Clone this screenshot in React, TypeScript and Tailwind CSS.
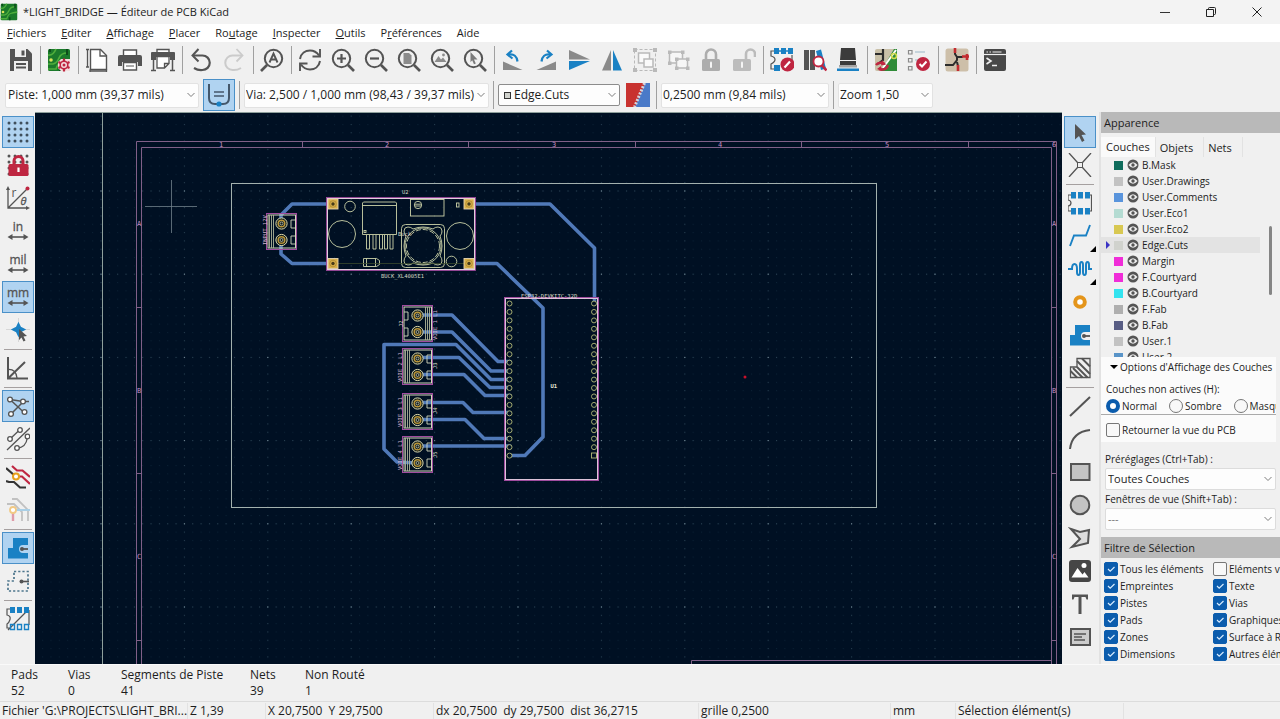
import React, { useState } from "react";

const G = "#545454";
const B = "#1a81c4";
const R = "#bf2641";
const L = "#b9b9b9";

type IconProps = { children: React.ReactNode };

function Svg({ children }: IconProps) {
  return (
    <svg viewBox="0 0 24 24" className="block size-6" fill="none" aria-hidden="true">
      {children}
    </svg>
  );
}

function Lens({ children }: IconProps) {
  return (
    <Svg>
      <circle cx="10.5" cy="10.5" r="8.7" stroke={G} strokeWidth="2" />
      <path d="M17 17l6 6" stroke={G} strokeWidth="2.6" />
      {children}
    </Svg>
  );
}

function PcbArt() {
  return (
    <>
      <rect x="1" y="1" width="22" height="22" rx="1.5" fill="#1b7a2b" />
      <path d="M1 7q5 1 8-6M1 16h5q4-1 6-6t8-5M1 21h8q2-6 5-7t9-2" stroke="#4fae3c" strokeWidth="1.700" />
      <path d="M3 1v3M20 1v6M13 23v-4" stroke="#0d4d1a" strokeWidth="2" />
      <circle cx="4" cy="12" r="1.8" fill="#d9e35a" />
    </>
  );
}

function Dim({ label }: { label: string }) {
  return (
    <Svg>
      <text x="12" y="12" textAnchor="middle" fontSize="12" fontFamily="Open Sans, sans-serif" fill={G} stroke={G} strokeWidth="0.3">
        {label}
      </text>
      <path d="M4 18h16" stroke={G} strokeWidth="1.6" />
      <path d="M1.5 18l5-3v6zM22.500 18l-5-3v6z" fill={G} />
    </Svg>
  );
}

function Padlock({ color, open }: { color: string; open?: boolean }) {
  return (
    <Svg>
      <path d={open ? "M14 11V6a4.500 4.500 0 0 1 9 0v3" : "M7 11V6.500a5 5 0 0 1 10 0V11"} stroke={color} strokeWidth="2.600" />
      <rect x={open ? 1 : 3} y="11" width="18" height="12" rx="1.500" fill={color} />
      <path d={open ? "M10 14.500v4.500" : "M12 14.500v4.500"} stroke="#f5f5f5" strokeWidth="2" strokeLinecap="round" />
    </Svg>
  );
}

const dots = (color: string) =>
  [3, 9, 15, 21].flatMap((x) => [3, 9, 15, 21].map((y) => <circle key={`${x}-${y}`} cx={x} cy={y} r="1.500" fill={color} />));

const icons: Record<string, React.ReactNode> = {
  save: (
    <Svg>
      <path d="M1 1h17.500L23 5.500V23H1z" fill={G} />
      <path d="M6 1h11v8H6zM5 13h14v10H5z" fill="#f0f0f0" />
      <path d="M12.500 2.500h3v5h-3z" fill={G} />
      <path d="M7 16h10M7 19.500h10" stroke={G} strokeWidth="1.800" />
    </Svg>
  ),
  board: (
    <Svg>
      <PcbArt />
      <path d="M11 14l3-3h9v12h-9l-3-3z" fill="#f3dede" />
      <circle cx="17" cy="17" r="3.800" stroke={R} strokeWidth="1.600" />
      <circle cx="17" cy="17" r="1.500" fill={R} />
      <path d="M17 10.500v2.500M17 21v2.500M11.500 14l2 1M20.500 19l2 1M22.500 14l-2 1M11.500 20l2-1" stroke={R} strokeWidth="2.200" />
    </Svg>
  ),
  page: (
    <Svg>
      <path d="M5.500 1.500h10l6 6v14h-16z" fill="#fff" stroke={G} strokeWidth="1.400" />
      <path d="M15 1.500v6.500h6.500M2.500 1v18M1 1.500h3M1 19h3M5 23h17M5 21.500V24M21.500 21.500V24" stroke={G} strokeWidth="1.300" />
    </Svg>
  ),
  print: (
    <Svg>
      <path d="M5.500 2h13v6h-13z" fill="#fff" stroke={G} strokeWidth="1.400" />
      <path d="M0 9q0-2 2-2h20q2 0 2 2v9h-4v-4H4v4H0z" fill={G} />
      <path d="M5.500 14.500h13V22h-13z" fill="#fff" stroke={G} strokeWidth="1.400" />
      <path d="M8 18h8" stroke={G} />
    </Svg>
  ),
  plot: (
    <Svg>
      <path d="M6 1.500h12V5H6z" fill="#fff" stroke={G} strokeWidth="1.400" />
      <path d="M0 5q0-1 1-1h22q1 0 1 1v7h-5V9H5v3H0z" fill={G} />
      <path d="M6 8.500h12v7l-4.500 4.500H6zM18 15.500h-4.500v4.500" fill="#fff" stroke={G} strokeWidth="1.300" />
      <path d="M2.500 12v10M21.500 12v10M0 22.500h5M19 22.500h5" stroke={G} strokeWidth="1.500" />
    </Svg>
  ),
  undo: (
    <Svg>
      <path d="M4 7.500h9.500a7 7 0 0 1 0 14.500Q9 22.500 5 20" stroke={G} strokeWidth="2.200" />
      <path d="M9.500 1L3.500 7.500l6 6" stroke={G} strokeWidth="2" />
    </Svg>
  ),
  redo: (
    <Svg>
      <path d="M20 7.500h-9.500a7 7 0 0 0 0 14.500Q15 22.500 19 20" stroke="#cbcbcb" strokeWidth="2" />
      <path d="M14.500 1l6 6.500-6 6" stroke="#cbcbcb" strokeWidth="1.800" />
    </Svg>
  ),
  find: (
    <Svg>
      <circle cx="13.500" cy="10.500" r="8.700" stroke={G} strokeWidth="2" />
      <path d="M7 17l-6 6" stroke={G} strokeWidth="2.600" />
      <path d="M9.500 14.500l4-9 4 9M11 11.500h5" stroke={G} strokeWidth="1.900" />
    </Svg>
  ),
  refresh: (
    <Svg>
      <path d="M2 11C3 5 7.500 2.500 12 2.500c4 0 7 2 9 5M22 13c-1 6-5.500 8.500-10 8.500-4 0-7-2-9-5" stroke={G} strokeWidth="2" />
      <path d="M22 1v7.500h-7.500M2 23v-7.500h7.500" stroke={G} strokeWidth="1.900" />
    </Svg>
  ),
  zin: <Lens><path d="M10.500 6v9M6 10.500h9" stroke={G} strokeWidth="2.200" /></Lens>,
  zout: <Lens><path d="M6 10.500h9" stroke={G} strokeWidth="2.200" /></Lens>,
  zfit: <Lens><path d="M6.500 5h5.500l2.500 2.500V16h-8z" fill="#8c8c8c" /></Lens>,
  zobj: <Lens><path d="M4.500 14l4-6 2.500 3.500 2-2 3.500 4.500z" fill="#8c8c8c" /><circle cx="13.500" cy="7" r="1.400" fill="#8c8c8c" /></Lens>,
  zsel: <Lens><path d="M7.500 4l7 7.500h-3.500l1.800 4-1.800.8-1.800-4-1.700 2z" fill="#7a7a7a" /></Lens>,
  ccw: (
    <Svg>
      <path d="M2 13.500v8.500h19.500z" fill="#8a8a8a" />
      <path d="M8 6.500q7.500-1 8.500 7" stroke={B} strokeWidth="2.200" />
      <path d="M11 2.500L6.500 6.500l5 4" stroke={B} strokeWidth="2.200" />
    </Svg>
  ),
  cw: (
    <Svg>
      <path d="M22 13.500v8.500H2.500z" fill="#8a8a8a" />
      <path d="M16 6.500q-7.500-1-8.500 7" stroke={B} strokeWidth="2.200" />
      <path d="M13 2.500l4.500 4-5 4" stroke={B} strokeWidth="2.200" />
    </Svg>
  ),
  flipv: (
    <Svg>
      <path d="M2 2l21 9.500H2z" fill="#8a8a8a" />
      <path d="M2 22l21-9H2z" fill={B} />
    </Svg>
  ),
  fliph: (
    <Svg>
      <path d="M11 2v20.500H2z" fill="#8a8a8a" />
      <path d="M13 2v20.500h9z" fill={B} />
    </Svg>
  ),
  group: (
    <Svg>
      <rect x="1.500" y="1.500" width="21" height="21" stroke={L} strokeDasharray="3 2" />
      <path d="M0 0h4v4H0zM20 0h4v4h-4zM0 20h4v4H0zM20 20h4v4h-4z" fill={L} />
      <rect x="5.500" y="5" width="11" height="10" fill="#fafafa" stroke={L} strokeWidth="1.500" />
      <rect x="11" y="11" width="9" height="8" fill="#fafafa" stroke={L} strokeWidth="1.500" />
    </Svg>
  ),
  ungroup: (
    <Svg>
      <rect x="3.500" y="4" width="13" height="11" fill="#f6f6f6" stroke={L} strokeWidth="1.500" />
      <rect x="10.500" y="11" width="11" height="9" fill="#f6f6f6" stroke={L} strokeWidth="1.500" />
      <path d="M2 2.500h3.500V6H2zM15 2.500h3.500V6H15zM2 13.500h3.500V17H2zM9 9.500h3.500V13H9zM20 9.500h3.500V13H20zM9 18.500h3.500V22H9zM20 18.500h3.500V22H20z" fill={L} />
    </Svg>
  ),
  lock: <Padlock color="#adadad" />,
  unlock: <Padlock color="#bcbcbc" open />,
  fpedit: (
    <Svg>
      <path d="M4 3H1v5q4 1 4 3.500T1 16v5h4M22 7v5" stroke={G} strokeWidth="1.200" />
      <path d="M4 3h19" stroke={B} strokeWidth="1.500" />
      <path d="M4 0h5v6H4zM11 0h5v6h-5zM18 0h5v6h-5zM4 17h6v6H4z" fill={B} />
      <circle cx="17.500" cy="16.500" r="7" fill={R} />
      <path d="M14.500 19.500l5.500-6" stroke="#fff" strokeWidth="2.200" />
    </Svg>
  ),
  lib: (
    <Svg>
      <path d="M1 2h5v20H1zM7 2h5v20H7z" fill={G} />
      <path d="M13 3l5-1.500 5 19-5 1.500z" fill={B} />
      <circle cx="15.500" cy="13.500" r="5" fill="#fff" stroke={R} strokeWidth="1.800" />
      <path d="M19 17.500l4.500 5" stroke={R} strokeWidth="2.600" />
    </Svg>
  ),
  stamp: (
    <Svg>
      <path d="M5 0h14l1 12H4zM4 13h16v4H4z" fill="#3b3b3b" />
      <path d="M3 17h18v2.500H3z" fill="#a5a5a5" />
      <path d="M1 20.500h22V23H1z" fill={B} />
    </Svg>
  ),
  update: (
    <Svg>
      <rect x="1" y="1" width="22" height="22" rx="2" fill="#c9c0a8" />
      <path d="M20 1h3v22H7z" fill="#2f8b38" />
      <path d="M1 6h8M9 1v11l-5 4" stroke="#2c2c2c" strokeWidth="2.200" />
      <path d="M22 2L9 20" stroke="#fff" strokeWidth="2" />
      <circle cx="20" cy="8" r="2.500" stroke="#d3dc4f" strokeWidth="1.500" />
      <path d="M2 17q3-4 9-1M14 17q-2 6-9 4" stroke={R} strokeWidth="2.400" />
      <path d="M8 12l4 4.500-5 1zM7 18l-4 3 5 2z" fill={R} />
    </Svg>
  ),
  drc: (
    <Svg>
      <path d="M1.500 2.500H5V6H1.500zM1.500 10.500H5V14H1.500zM1.500 18.500H5V22H1.500z" stroke="#8a8a8a" strokeWidth="1.200" />
      <path d="M8 4h10M8 12h5" stroke="#9bb8c8" strokeWidth="1.200" />
      <circle cx="16" cy="16" r="7" fill={R} />
      <path d="M12.500 16l2.500 2.500 4.500-5" stroke="#fff" strokeWidth="2" />
    </Svg>
  ),
  sch: (
    <Svg>
      <rect x="0.500" y="0.500" width="23" height="23" rx="2.500" fill="#cdbfa9" />
      <path d="M0 17h8l4-5V9l-2-3V1M12 9h6M12 14l1 4" stroke="#2c2c2c" strokeWidth="2" />
      <path d="M10 0v5M17 8.500h7M13 17v6M22 6v6" stroke="#c32b30" strokeWidth="2.600" />
    </Svg>
  ),
  term: (
    <Svg>
      <rect x="1" y="1" width="22" height="22" rx="2" fill="#484848" />
      <path d="M1 6.500h22" stroke="#f0f0f0" strokeWidth="1.200" />
      <path d="M3.500 4h1.500M6.500 4H8M9.500 4h9" stroke="#f0f0f0" strokeWidth="1.200" />
      <path d="M3.500 10l4.500 3-4.500 3M9 17.500h5" stroke="#f0f0f0" strokeWidth="1.600" />
    </Svg>
  ),
  trackw: (
    <Svg>
      <path d="M2 1v14q0 6 6 6h8q6 0 6-6V1" stroke="#44576b" strokeWidth="2" />
      <path d="M7 9h10M7 13h10" stroke="#44576b" strokeWidth="1.500" />
      <circle cx="12" cy="21" r="2.600" fill={B} />
    </Svg>
  ),
  grid: <Svg>{dots("#3f4f5c")}</Svg>,
  gridlock: (
    <Svg>
      {dots(G)}
      <path d="M8 12V8a4.500 4.500 0 0 1 9 0v4" stroke={R} strokeWidth="3" />
      <rect x="2.500" y="11" width="20" height="12" rx="1.500" fill={R} />
      <path d="M12.500 14.500V19" stroke="#fff" strokeWidth="2.200" />
    </Svg>
  ),
  polar: (
    <Svg>
      <path d="M2 3v19h19M2 22L21 3" stroke={G} strokeWidth="1.300" />
      <path d="M2 0L0 4h4zM24 22l-4-2v4z" fill={G} />
      <circle cx="21.500" cy="2.500" r="2" fill={R} />
      <text x="5.500" y="11" fontSize="12" fontFamily="Open Sans, sans-serif" fill={G}>r</text>
      <text x="14.500" y="19" fontSize="11" fontStyle="italic" fontFamily="Open Sans, sans-serif" fill={G} stroke={G} strokeWidth="0.300">θ</text>
    </Svg>
  ),
  in: <Dim label="in" />,
  mil: <Dim label="mil" />,
  mm: <Dim label="mm" />,
  cursor: (
    <Svg>
      <path d="M12.500 0v24M0 11.500h24" stroke="#d0d0d0" strokeWidth="0.800" />
      <path d="M12.500 5.500l2 4 4 2-4 2-2 4-2-4-4-2 4-2z" fill={B} stroke={B} strokeWidth="1.500" />
      <path d="M13 11l8 7-3.500.5 2 4-2 1-2-4-2.500 2.500z" fill={G} />
    </Svg>
  ),
  angle: (
    <Svg>
      <path d="M2 1v21.500h20M2 22.500L19 6" stroke={G} strokeWidth="2" />
      <path d="M2 13.500q8-.5 9 8.500" stroke={G} strokeWidth="1.300" />
    </Svg>
  ),
  rats: (
    <Svg>
      <path d="M4 5.500l13 2h6M5 20l12-12M4 5.500l14 13" stroke={G} strokeWidth="1.500" />
      <g fill="#fff" stroke={G} strokeWidth="1.300"><circle cx="4" cy="5.500" r="2.400" /><circle cx="17" cy="7.500" r="2.400" /><circle cx="5" cy="20" r="2.400" /><circle cx="18.500" cy="18" r="2.400" /></g>
    </Svg>
  ),
  curved: (
    <Svg>
      <path d="M1 23L24 1M4 12L14 2.500M11 21q9 0 10.500-11" stroke={G} strokeWidth="1.300" />
      <g fill="#fff" stroke={G} strokeWidth="1.300"><circle cx="4" cy="12" r="2.300" /><circle cx="14" cy="3" r="2.300" /><circle cx="11" cy="21" r="2.300" /><circle cx="21.500" cy="9.500" r="2.300" /></g>
    </Svg>
  ),
  contrast: (
    <Svg>
      <path d="M6 1l5 4.500h5.500l7.500 6.500M11 11.500h5l8 7.500" stroke={R} strokeWidth="2.200" />
      <path d="M0 3l8 7M0 16l3 1h5l6 5.500h6" stroke="#333" strokeWidth="2.200" />
      <circle cx="10" cy="11.500" r="3" fill="#fff" stroke="#e8a01c" strokeWidth="2" />
    </Svg>
  ),
  nets: (
    <Svg>
      <path d="M1 6h7l8 8v9M6 1h5l11 11v11" stroke="#c1c1c1" strokeWidth="1.800" />
      <path d="M6 12h18" stroke="#a9cfe6" strokeWidth="2" />
      <path d="M7 13v10" stroke="#df9ba8" strokeWidth="2.400" />
      <circle cx="7" cy="12" r="3" fill="#fff" stroke="#f1c984" strokeWidth="1.800" />
    </Svg>
  ),
  zone: (
    <Svg>
      <path d="M7 2h15v7h-5a4 4 0 1 0 0 8h5v5.500H2V12h5z" fill={B} />
      <path d="M15 13h7" stroke={G} strokeWidth="1.800" />
      <circle cx="16" cy="13" r="2" fill={G} />
    </Svg>
  ),
  zoneoff: (
    <Svg>
      <path d="M8 2.500h14V22H2V12h6z" stroke="#4c758c" strokeWidth="1.700" strokeDasharray="2.200 2" />
      <path d="M15 12.500h8" stroke={G} strokeWidth="1.600" />
      <circle cx="15.500" cy="12.500" r="2" fill={G} />
    </Svg>
  ),
  outline: (
    <Svg>
      <path d="M4 2H1v6q4 1 3 4.500T1 17v4h3M23 3v15M2 23L21 4" stroke={G} strokeWidth="1.200" />
      <path d="M4 0h5v6H4zM11 0h5v6h-5zM18 0h5v6h-5z" fill={B} />
      <path d="M4.500 17.500h4v5h-4zM11.500 17.500h4v5h-4zM18.500 17.500h4v5h-4z" stroke={B} strokeWidth="1.400" />
    </Svg>
  ),
  arrow: <Svg><path d="M7 4l11 10.500-4.500.5 3 5.500-2.500 1.500-3-6-4 3.500z" fill={G} /></Svg>,
  localrat: (
    <Svg>
      <path d="M1 0l8.500 9.500M23 0l-8.500 9.500M1 24l8.500-9.500M23 24l-8.500-9.500" stroke={G} strokeWidth="1.300" />
      <rect x="9.500" y="9.500" width="5" height="5" stroke={G} />
    </Svg>
  ),
  footprint: (
    <Svg>
      <path d="M3 4H0v5q3 .5 3 3t-3 3v5h3M21 4h2.500v16H21" stroke={G} strokeWidth="1.200" />
      <path d="M3 1h5v6.500H3zM10 1h5v6.500h-5zM17 1h5v6.500h-5zM3 17h5v6.500H3zM10 17h5v6.500h-5zM17 17h5v6.500h-5z" fill={B} />
    </Svg>
  ),
  route: <Svg><path d="M2 22l4-10.500h12L22 1" stroke={B} strokeWidth="1.900" /></Svg>,
  tune: <Svg><path d="M0 12h4q0-5 2.500-5T9 12v3q0 3 1.500 3t1.500-3V8q0-3 1.500-3T15 8v7q0 3 1.500 3t1.500-3V8q0-3 1.500-3T21 8v4h3" stroke={B} strokeWidth="2" /></Svg>,
  via: <Svg><circle cx="12" cy="12" r="4.800" fill="#fff" stroke="#e4951b" strokeWidth="4" /></Svg>,
  rule: (
    <Svg>
      <path d="M9 2.500h13v19H2.500V11H9z" fill="#eee" stroke={G} strokeWidth="1.300" />
      <path d="M9 5l13 13M14 2.500l8 8M9 11l10.500 10.500M5 12l9.500 9.500M2.500 15l6.500 6.500" stroke={G} strokeWidth="1.900" />
    </Svg>
  ),
  line: <Svg><path d="M2 22L22 3" stroke={G} strokeWidth="2" /></Svg>,
  arc: <Svg><path d="M2 22Q4 5 22 3" stroke={G} strokeWidth="2" /></Svg>,
  rect: <Svg><path d="M3 4h18.500v16H3z" fill="#c3c3c3" stroke={G} strokeWidth="2" /></Svg>,
  circle: <Svg><circle cx="12" cy="12" r="9.300" fill="#c3c3c3" stroke={G} strokeWidth="2" /></Svg>,
  poly: <Svg><path d="M3 3l9 3 9-2-1 13-16 4 8-8z" fill="#ddd" stroke={G} strokeWidth="2" /></Svg>,
  image: (
    <Svg>
      <rect x="1" y="1" width="22" height="22" rx="3" fill="#464646" />
      <path d="M3.500 18.500l6-9.500 5 6.500 2-2.500 4 5.500z" fill="#fff" />
      <circle cx="16" cy="6.500" r="2.500" fill="#fff" />
    </Svg>
  ),
  text: <Svg><path d="M4 2.500h16v5h-1.500l-1-2.500H13.500v17h-3V5H6.500l-1 2.500H4z" fill={G} /></Svg>,
  textbox: (
    <Svg>
      <path d="M3 4h19v16H3z" fill="#ccc" stroke={G} strokeWidth="2" />
      <path d="M6 9h12M6 12h8M6 15h11" stroke={G} strokeWidth="1.400" />
    </Svg>
  ),
};

type Tool = { id: string; label: string; active?: boolean; more?: boolean } | "|";

const mainTools: Tool[] = [
  { id: "save", label: "Enregistrer" }, "|",
  { id: "board", label: "Options du circuit imprimé" }, "|",
  { id: "page", label: "Ajustage page" }, { id: "print", label: "Imprimer" }, { id: "plot", label: "Tracer" }, "|",
  { id: "undo", label: "Annuler" }, { id: "redo", label: "Refaire" }, "|",
  { id: "find", label: "Chercher" }, "|",
  { id: "refresh", label: "Rafraîchir" }, { id: "zin", label: "Zoom avant" }, { id: "zout", label: "Zoom arrière" },
  { id: "zfit", label: "Zoom automatique" }, { id: "zobj", label: "Zoom sur les objets" }, { id: "zsel", label: "Zoom sur la sélection" }, "|",
  { id: "ccw", label: "Rotation anti-horaire" }, { id: "cw", label: "Rotation horaire" }, { id: "flipv", label: "Miroir vertical" },
  { id: "fliph", label: "Miroir horizontal" }, { id: "group", label: "Grouper" }, { id: "ungroup", label: "Dégrouper" },
  { id: "lock", label: "Verrouiller" }, { id: "unlock", label: "Déverrouiller" }, "|",
  { id: "fpedit", label: "Éditeur d'empreintes" }, { id: "lib", label: "Librairies d'empreintes" }, { id: "stamp", label: "Visualisateur 3D" }, "|",
  { id: "update", label: "Mise à jour du PCB" }, { id: "drc", label: "Contrôle DRC" }, "|",
  { id: "sch", label: "Éditeur de schématique" }, "|",
  { id: "term", label: "Console" },
];

const leftTools: Tool[] = [
  { id: "grid", label: "Afficher la grille", active: true }, { id: "gridlock", label: "Grille verrouillée" }, { id: "polar", label: "Coordonnées polaires" },
  { id: "in", label: "Pouces" }, { id: "mil", label: "Mils" }, { id: "mm", label: "Millimètres", active: true }, { id: "cursor", label: "Curseur" }, "|",
  { id: "angle", label: "Limiter les angles" }, "|",
  { id: "rats", label: "Chevelu", active: true }, { id: "curved", label: "Chevelu courbe" }, "|",
  { id: "contrast", label: "Contraste élevé" }, { id: "nets", label: "Surbrillance des nets" }, "|",
  { id: "zone", label: "Zones remplies", active: true }, { id: "zoneoff", label: "Contours de zones" }, "|",
  { id: "outline", label: "Contours des pads" },
];

const rightTools: Tool[] = [
  { id: "arrow", label: "Sélection", active: true }, { id: "localrat", label: "Chevelu local" }, "|",
  { id: "footprint", label: "Ajouter une empreinte" }, { id: "route", label: "Router", more: true }, { id: "tune", label: "Ajuster la longueur", more: true },
  { id: "via", label: "Ajouter une via" }, { id: "zone", label: "Ajouter une zone" }, { id: "rule", label: "Zone interdite" }, "|",
  { id: "line", label: "Ligne" }, { id: "arc", label: "Arc" }, { id: "rect", label: "Rectangle" }, { id: "circle", label: "Cercle" },
  { id: "poly", label: "Polygone" }, { id: "image", label: "Image" }, { id: "text", label: "Texte" }, { id: "textbox", label: "Boîte de texte" },
];

function ToolButton({ tool }: { tool: Exclude<Tool, "|"> }) {
  return (
    <button
      type="button"
      aria-label={tool.label}
      title={tool.label}
      className={
        tool.active
          ? "relative grid size-8 shrink-0 place-items-center border border-[#4a90c8] bg-[#b0d3f1]"
          : "relative grid size-8 shrink-0 place-items-center"
      }
    >
      {icons[tool.id]}
      {tool.more && <span className="absolute right-0 bottom-0 size-0 border-b-6 border-l-6 border-b-black border-l-transparent" />}
    </button>
  );
}

function VerticalTools({ tools, label, className }: { tools: Tool[]; label: string; className: string }) {
  return (
    <div role="toolbar" aria-label={label} className={`flex shrink-0 flex-col items-center gap-px overflow-hidden pt-1 ${className}`}>
      {tools.map((t, i) =>
        t === "|" ? (
          <div key={i} className="flex h-1 w-7 shrink-0 items-center"><span className="h-px w-full bg-[#a5a0a0]" /></div>
        ) : (
          <ToolButton key={i} tool={t} />
        )
      )}
    </div>
  );
}

function Combo({ label, value, className, selectClass }: { label: string; value: string; className: string; selectClass: string }) {
  return (
    <div className={`relative shrink-0 ${className}`}>
      <select aria-label={label} defaultValue={value} className={`block w-full appearance-none rounded-xs border outline-none ${selectClass}`}>
        <option>{value}</option>
      </select>
      <svg viewBox="0 0 8 5" className="pointer-events-none absolute top-1/2 right-1 h-[5px] w-2 -translate-y-1/2" fill="none" aria-hidden="true">
        <path d="M0.500 0.500L4 4l3.500-3.500" stroke="#7d7d7d" />
      </svg>
    </div>
  );
}

function Sep() {
  return <span className="h-7 w-px shrink-0 bg-[#a0a0a0]" />;
}

type ConnectorProps = { x: number; y: number; flip?: boolean };

function Connector({ x, y, flip }: ConnectorProps) {
  const bars = flip ? [22, 24, 26] : [2, 4, 6];
  return (
    <g transform={`translate(${x} ${y})`} fill="none">
      <rect x="-0.500" y="-0.500" width="30" height="36" stroke="#a04c9f" />
      <rect x="1" y="1" width="27.500" height="33" stroke="#d3d8bc" />
      {bars.map((b) => <path key={b} d={`M${b + 0.5} 1v33`} stroke="#aeb498" strokeWidth="0.900" />)}
      <path d={flip ? "M1 6h4v8H1M1 22h4v8H1" : "M28 6h-4v8h4M28 22h-4v8h4"} stroke="#d3d8bc" strokeWidth="0.900" />
      {[9.5, 26].map((cy) => (
        <g key={cy}>
          <circle cx="14.500" cy={cy} r="5.600" fill="#0c1a1c" stroke="#e0dcae" strokeWidth="1" />
          <circle cx="14.500" cy={cy} r="3.300" stroke="#b8943a" strokeWidth="1.500" />
          <circle cx="14.500" cy={cy} r="1.500" stroke="#e5e0c0" strokeWidth="0.700" />
        </g>
      ))}
    </g>
  );
}

const tracks = [
  "M417 315H452L498 361.500H510", "M417 332H452L491 371H510", "M417 463L397 462L384 449V344.500H456L491 379.500H510",
  "M417 357.500H459L490 387.500H510", "M417 374.500H464L485 395.500H510", "M417 402.500H463L473 412.500H510",
  "M417 419.500H465L484 438.500H510", "M417 446H510", "M510 455.500H525L543 437V308L497 263.500H469",
  "M469 204H550L594.500 248V303", "M333 204H292L281 215V224", "M281 240V254L292 263.500H333",
];

const pins = Array.from({ length: 19 }, (_, i) => 303.5 + i * 8.45);

function Board() {
  return (
    <svg
      viewBox="35 112 1027 553"
      preserveAspectRatio="xMinYMin slice"
      className="block h-full w-full bg-[#001023]"
      role="img"
      aria-label="Circuit imprimé"
      fontFamily="DejaVu Sans Mono, monospace"
      fontSize="5.500"
    >
      <defs>
        <pattern id="fine" x="517.500" y="190.500" width="8.340" height="8.320" patternUnits="userSpaceOnUse"><rect width="1" height="1" fill="#0c2235" /></pattern>
        <pattern id="rows" x="517.500" y="190.500" width="8.340" height="83.200" patternUnits="userSpaceOnUse"><rect width="1" height="1" fill="#2b4253" /></pattern>
        <pattern id="cols" x="517.500" y="190.500" width="83.400" height="8.320" patternUnits="userSpaceOnUse"><rect width="1" height="1" fill="#263d4e" /></pattern>
        <pattern id="cross" x="517.500" y="190.500" width="83.400" height="83.200" patternUnits="userSpaceOnUse"><rect width="1" height="1" fill="#7a8e9a" /></pattern>
      </defs>
      {["fine", "rows", "cols", "cross"].map((p) => <rect key={p} x="35" y="112" width="1600" height="1000" fill={`url(#${p})`} />)}

      <path d="M35 112.500H1700M102.500 112V1200" stroke="#8fa09c" fill="none" />
      <g stroke="#806088" fill="none">
        <path d="M136.500 1200V141.500H1056.500V1200M141.500 1200V147.500H1051.500V1200" />
        <path d="M302.500 142v5M468.500 142v5M635.500 142v5M801.500 142v5M968.500 142v5" />
        <path d="M136 307.500h5M136 473.500h5M136 640.500h5M1051 307.500h5M1051 473.500h5M1051 640.500h5" />
        <path d="M691.500 700V660.500H1051" />
      </g>
      <g fill="#c48fc2" textAnchor="middle" fontSize="7">
        {[221, 387, 554, 720, 887, 1054].map((x, i) => <text key={x} x={x} y="147">{i + 1}</text>)}
        {[224, 391, 557].map((y, i) => (
          <React.Fragment key={y}>
            <text x="139" y={y + 2}>{"ABC"[i]}</text>
            <text x="1054" y={y + 2}>{"ABC"[i]}</text>
          </React.Fragment>
        ))}
      </g>

      <rect x="231.500" y="183.500" width="645" height="324" fill="none" stroke="#a3b1ae" />
      <g stroke="#5079b8" strokeWidth="3.600" fill="none" strokeLinejoin="round" strokeLinecap="round">
        {tracks.map((d) => <path key={d} d={d} />)}
      </g>

      <g fill="none" stroke="#ccd2a8" strokeWidth="0.900">
        <rect x="326.500" y="197.500" width="149" height="73" stroke="#a04c9f" />
        <rect x="327.500" y="198.500" width="147" height="71" stroke="#e0d0dc" strokeWidth="1" />
        <circle cx="350" cy="206.500" r="5.300" />
        <circle cx="342" cy="234" r="13.500" />
        <circle cx="460" cy="236" r="13.500" />
        <circle cx="451.500" cy="261.500" r="5.300" />
        <path d="M362.500 205.500h34M362.500 234.500V203l1-1h32l1 1v31.500z" />
        <path d="M366.500 235v14h3v-14M373 235v14h3v-14M379.500 235v14h3v-14M384.500 235v14h3v-14M390 235v14h3v-14" />
        <rect x="364" y="230.500" width="2" height="2" />
        <rect x="410.500" y="199.500" width="33.500" height="16.500" />
        <circle cx="418" cy="205" r="3.700" />
        <path d="M415 204.200h6M415 206h6" />
        <rect x="456.500" y="203" width="2.500" height="4" />
        <rect x="401.500" y="224.500" width="43" height="43" rx="4" />
        <path d="M404 231q0-4 4-4 3 0 5 2 10-4 20 0 2-2 5-2 4 0 4 4 0 3-2 5 4 10 0 20 2 2 2 5 0 4-4 4-3 0-5-2-10 4-20 0-2 2-5 2-4 0-4-4 0-3 2-5-4-10 0-20-2-2-2-5z" />
        <circle cx="423" cy="246" r="18" />
        <circle cx="423" cy="246" r="16.500" strokeDasharray="5 2" />
        <path d="M363.500 258.500h13l3 2v4l-3 2h-13zM366.500 258.500v8M375.500 258.500v8" />
        <path d="M338 263.500h126" stroke="#41512f" strokeWidth="0.700" />
      </g>
      {[[333, 204], [469, 204], [333, 263.5], [469, 263.5]].map(([x, y]) => (
        <g key={`${x}-${y}`}>
          <rect x={x - 5} y={y - 5} width="10" height="10" fill="#d9b04a" stroke="#e6d4b0" strokeWidth="0.900" />
          <circle cx={x} cy={y} r="1.700" fill="#473b18" />
          <circle cx={x} cy={y} r="3.300" fill="none" stroke="#8e7124" strokeWidth="0.500" />
        </g>
      ))}

      <Connector x={267} y={214} />
      <Connector x={403} y={306} flip />
      <Connector x={403} y={349} />
      <Connector x={403} y={394} />
      <Connector x={403} y={437} />

      <rect x="504.500" y="297.500" width="94" height="183" fill="none" stroke="#a04c9f" />
      <rect x="505.500" y="298.500" width="92" height="181" fill="none" stroke="#dcc3d9" />
      <g fill="#001023" stroke="#b3ba78" strokeWidth="0.900">
        {pins.map((y) => <circle key={y} cx="509.500" cy={y} r="2.500" />)}
        {pins.slice(0, -1).map((y) => <circle key={y} cx="594" cy={y} r="2.500" />)}
        <rect x="591.500" y="453" width="5" height="5" />
      </g>

      <g fill="#d4d6c4">
        <text x="402" y="194">U2</text>
        <text x="550.500" y="388" fill="#e8e8d8" fontWeight="bold">U1</text>
        <text x="381" y="278">BUCK_XL4005E1</text>
        <text x="521" y="297.500">ESP32-DEVKITC-32D</text>
        <text x="398" y="236">Buck</text>
        <text transform="translate(266.500 245) rotate(-90)" fill="#d3b3d0">INPUT 12V</text>
        <text transform="translate(403 327) rotate(-90)">J2</text>
        <text transform="translate(437 369) rotate(-90)">J3</text>
        <text transform="translate(437 414) rotate(-90)">J4</text>
        <text transform="translate(437 458) rotate(-90)">J5</text>
        <text transform="translate(437 340) rotate(-90)" fill="#d3b3d0">VOIE 1 L1</text>
        <text transform="translate(402 382) rotate(-90)" fill="#d3b3d0">VOIE 2 L1</text>
        <text transform="translate(402 427) rotate(-90)" fill="#d3b3d0">VOIE 3 L1</text>
        <text transform="translate(402 470) rotate(-90)" fill="#d3b3d0">VOIE 4 L1</text>
      </g>

      <path d="M145 206.500h52M171.500 180v53" stroke="#70808a" strokeWidth="0.800" />
      <circle cx="745" cy="377" r="1.500" fill="#c8102a" />
    </svg>
  );
}

const layers: [string, string][] = [
  ["B.Mask", "bg-[#0f6c5c]"], ["User.Drawings", "bg-[#c2c2c2]"], ["User.Comments", "bg-[#5994dc]"], ["User.Eco1", "bg-[#b4dbd2]"],
  ["User.Eco2", "bg-[#d8c852]"], ["Edge.Cuts", "bg-[#d0d2cd]"], ["Margin", "bg-[#f02dd8]"], ["F.Courtyard", "bg-[#f02dd8]"],
  ["B.Courtyard", "bg-[#33e3ef]"], ["F.Fab", "bg-[#afafaf]"], ["B.Fab", "bg-[#585d84]"], ["User.1", "bg-[#c2c2c2]"], ["User.2", "bg-[#5994c8]"],
];

function Check({ label, on }: { label: string; on?: boolean }) {
  return (
    <label className="flex h-[17px] items-center gap-0.5 whitespace-nowrap">
      <span className="relative size-[14px] shrink-0">
        <input type="checkbox" defaultChecked={on} className="peer block size-[14px] appearance-none rounded-xs border border-[#777] bg-[#f8f8f8] checked:border-[#0b5cad] checked:bg-[#0b5cad]" />
        <svg viewBox="0 0 14 14" className="pointer-events-none absolute top-0 left-0 hidden size-[14px] peer-checked:block" fill="none" aria-hidden="true">
          <path d="M4 7l2.200 2.200L10.500 5" stroke="#d8ecff" strokeWidth="1.200" />
        </svg>
      </span>
      {label}
    </label>
  );
}

function Appearance() {
  const [tab, setTab] = useState("Couches");
  return (
    <aside className="flex w-[181px] shrink-0 flex-col overflow-hidden border-l-2 border-[#e2e2e2] text-[10px] leading-4">
      <h2 className="flex h-[21px] shrink-0 items-center bg-[#b9b9b9] pl-[3px] text-[11px]">Apparence</h2>
      <div role="tablist" className="mt-1 flex h-5 shrink-0 items-stretch text-[11px]">
        {["Couches", "Objets", "Nets"].map((t) => (
          <button
            key={t}
            type="button"
            role="tab"
            aria-selected={t === tab}
            onClick={() => setTab(t)}
            className={t === tab ? "border-r border-[#e2e2e2] bg-[#fafafa] px-[5px]" : "border-r border-[#e2e2e2] pt-0.5 pr-2.5 pl-1"}
          >
            {t}
          </button>
        ))}
      </div>
      <div className="flex h-[200px] shrink-0 overflow-hidden">
        <ul className="w-[159px]">
          {layers.map(([name, color]) => (
            <li key={name} className={name === "Edge.Cuts" ? "flex h-4 items-center bg-[#e3e3e3] pl-[5px]" : "flex h-4 items-center pl-[5px]"}>
              <span className={name === "Edge.Cuts" ? "mr-1 size-0 border-y-4 border-l-4 border-y-transparent border-l-[#3a33c4]" : "mr-1 w-1"} />
              <span className={`size-[9px] ${color}`} />
              <button type="button" aria-label={`Visibilité ${name}`} className="mr-[3px] ml-1">
                <svg viewBox="0 0 12 12" className="block size-3" aria-hidden="true">
                  <circle cx="6" cy="6" r="5.500" fill="#555" />
                  <path d="M1.500 6q4.500-5.500 9 0q-4.500 5.500-9 0z" fill="#f0f0f0" />
                  <circle cx="6" cy="6" r="1.700" fill="#555" />
                </svg>
              </button>
              {name}
            </li>
          ))}
        </ul>
        <div className="flex-1 pt-[69px] pl-[9px]">
          <div className="h-[69px] w-[3px] rounded-full bg-[#858585]" />
        </div>
      </div>
      <div className="mr-1 shrink-0 overflow-hidden bg-[#fbfbfb] pb-1 whitespace-nowrap">
        <button type="button" aria-expanded="true" className="flex h-5 items-center gap-0.5 pl-[9px]">
          <span className="size-0 border-x-4 border-t-4 border-x-transparent border-t-black" />
          Options d'Affichage des Couches
        </button>
        <fieldset className="mt-1">
          <legend className="pl-[5px]">Couches non actives (H):</legend>
          <div className="flex h-[18px] items-center gap-3 border-b border-[#aaa] pl-[5px]">
            {["Normal", "Sombre", "Masquer"].map((o) => (
              <label key={o} className="flex items-center gap-0.5">
                <input
                  type="radio"
                  name="inactive"
                  defaultChecked={o === "Normal"}
                  className="size-[14px] shrink-0 appearance-none rounded-full border border-[#777] bg-[#f8f8f8] checked:border-4 checked:border-[#0b5cad] checked:bg-white"
                />
                {o}
              </label>
            ))}
          </div>
        </fieldset>
        <div className="mt-1.5 pl-[5px]"><Check label="Retourner la vue du PCB" /></div>
      </div>
      <div className="shrink-0 pt-2 pr-1 pl-1">
        <p className="h-[18px] leading-[18px]">Préréglages (Ctrl+Tab) :</p>
        <Combo label="Préréglages" value="Toutes Couches" className="w-full" selectClass="h-[22px] border-[#dcdcdc] bg-[#fdfdfd] pl-0.5 text-[11px]" />
        <p className="h-[18px] leading-[18px]">Fenêtres de vue (Shift+Tab) :</p>
        <Combo label="Fenêtres de vue" value="---" className="w-full" selectClass="h-[22px] border-[#dcdcdc] bg-[#fdfdfd] pl-0.5 text-[11px] text-[#777]" />
      </div>
      <h2 className="mt-[7px] flex h-[21px] shrink-0 items-center bg-[#b9b9b9] pl-[3px] text-[11px]">Filtre de Sélection</h2>
      <div className="grid shrink-0 grid-cols-[109px_109px] pt-0.5 pl-[3px]">
        <Check label="Tous les éléments" on />
        <Check label="Eléments verrouillés" />
        <Check label="Empreintes" on />
        <Check label="Texte" on />
        <Check label="Pistes" on />
        <Check label="Vias" on />
        <Check label="Pads" on />
        <Check label="Graphiques" on />
        <Check label="Zones" on />
        <Check label="Surface à Règles" on />
        <Check label="Dimensions" on />
        <Check label="Autres éléments" on />
      </div>
    </aside>
  );
}

const menus: [string, string, string][] = [
  ["", "F", "ichiers"], ["", "E", "diter"], ["", "A", "ffichage"], ["", "P", "lacer"], ["Ro", "u", "tage"],
  ["", "I", "nspecter"], ["", "O", "utils"], ["P", "r", "éférences"], ["Aide", "", ""],
];

const stats: [string, string, string][] = [
  ["Pads", "52", "w-[57px]"], ["Vias", "0", "w-[53px]"], ["Segments de Piste", "41", "w-[129px]"], ["Nets", "39", "w-[55px]"], ["Non Routé", "1", "w-20"],
];

const status: [string, string][] = [
  ["Fichier 'G:\\PROJECTS\\LIGHT_BRI...", "w-[188px]"], ["Z 1,39", "w-[78px]"], ["X 20,7500  Y 29,7500", "w-[168px]"],
  ["dx 20,7500  dy 29,7500  dist 36,2715", "w-[265px]"], ["grille 0,2500", "w-[192px]"], ["mm", "w-[65px]"], ["Sélection élément(s)", "w-[168px]"],
];

export default function App() {
  return (
    <div className="flex h-screen flex-col overflow-hidden bg-[#f0f0f0] font-['Open_Sans',sans-serif] text-xs text-[#1d1d1d]">
      <header className="flex h-6 shrink-0 items-center bg-[#f3f3f3]">
        <svg viewBox="0 0 24 24" className="size-[18px]" fill="none" aria-hidden="true"><PcbArt /></svg>
        <h1 className="ml-[5px] flex-1 text-[11px]">*LIGHT_BRIDGE — Éditeur de PCB KiCad</h1>
        <button type="button" aria-label="Réduire" className="grid h-full w-[47px] place-items-center"><svg viewBox="0 0 10 10" className="size-2.5" fill="none"><path d="M0 5.500h10" stroke="#333" /></svg></button>
        <button type="button" aria-label="Restaurer" className="grid h-full w-[46px] place-items-center"><svg viewBox="0 0 10 10" className="size-2.5" fill="none"><path d="M0.500 2.500h7v7h-7zM2.500 2V1.500q0-1 1-1h5q1 0 1 1v5q0 1-1 1H8" stroke="#222" /></svg></button>
        <button type="button" aria-label="Fermer" className="grid h-full w-[46px] place-items-center"><svg viewBox="0 0 10 10" className="size-2.5" fill="none"><path d="M0.500 0.500l9 9M9.500 0.500l-9 9" stroke="#222" /></svg></button>
      </header>

      <nav className="flex h-[18px] shrink-0 items-center gap-[15px] bg-white pl-[7px] text-[11px]">
        {menus.map(([a, u, b]) => (
          <button key={a + u + b} type="button">{a}<span className="underline">{u}</span>{b}</button>
        ))}
      </nav>

      <div role="toolbar" aria-label="Principal" className="flex h-9 shrink-0 items-center gap-px pl-[5px]">
        {mainTools.map((t, i) =>
          t === "|" ? (
            <div key={i} className="flex h-7 w-1 shrink-0 justify-center"><span className="h-full w-px bg-[#a0a0a0]" /></div>
          ) : (
            <ToolButton key={i} tool={t} />
          )
        )}
      </div>

      <div role="toolbar" aria-label="Options" className="flex h-[34px] shrink-0 items-center gap-1 pl-[5px]">
        <Combo label="Piste" value="Piste: 1,000 mm (39,37 mils)" className="w-[194px]" selectClass="h-[25px] border-[#e2e2e2] bg-[#fdfdfd] pl-0.5" />
        <ToolButton tool={{ id: "trackw", label: "Largeur de piste automatique", active: true }} />
        <Sep />
        <Combo label="Via" value="Via: 2,500 / 1,000 mm (98,43 / 39,37 mils)" className="w-[245px]" selectClass="h-[25px] border-[#e2e2e2] bg-[#fdfdfd] pl-px" />
        <Sep />
        <div className="relative">
          <Combo label="Couche" value="Edge.Cuts" className="w-[122px]" selectClass="h-[22px] border-[#8c8c8c] bg-[#fdfdfd] pl-[15px]" />
          <span className="pointer-events-none absolute top-2 left-[6px] size-[7px] border border-[#333] bg-[#d0d2cd]" />
        </div>
        <button type="button" aria-label="Paire de couches" className="mx-0.5 size-6">
          <svg viewBox="0 0 24 24" className="block size-6" fill="none">
            <path d="M0 0h24v24H0z" fill="#4a7ac8" />
            <path d="M0 0h19L9 24H0z" fill="#c8322f" />
            <path d="M18.500 0L8.500 24" stroke="#d5d5dd" strokeWidth="3" strokeDasharray="2 1.500" />
          </svg>
        </button>
        <Sep />
        <Combo label="Grille" value="0,2500 mm (9,84 mils)" className="w-[168px]" selectClass="h-[25px] border-[#e2e2e2] bg-[#fdfdfd] pl-px" />
        <Sep />
        <Combo label="Zoom" value="Zoom 1,50" className="w-[95px]" selectClass="h-[25px] border-[#e2e2e2] bg-[#fdfdfd] pl-px" />
      </div>

      <main className="flex min-h-0 flex-1">
        <VerticalTools tools={leftTools} label="Affichage" className="w-[35px]" />
        <div className="min-w-0 flex-1 overflow-hidden"><Board /></div>
        <VerticalTools tools={rightTools} label="Outils" className="w-[37px] pr-px" />
        <Appearance />
      </main>

      <dl className="flex h-[37px] shrink-0 items-center border-t border-[#fafafa] pl-[11px] leading-4">
        {stats.map(([k, v, w]) => (
          <div key={k} className={`${w} whitespace-nowrap`}><dt>{k}</dt><dd>{v}</dd></div>
        ))}
      </dl>
      <footer className="flex h-[18px] shrink-0 items-center border-t border-[#dcdcdc]">
        {status.map(([s, w]) => (
          <span key={s} className={`${w} shrink-0 border-r border-[#e2e2e2] pl-0.5 whitespace-pre`}>{s}</span>
        ))}
      </footer>
    </div>
  );
}
